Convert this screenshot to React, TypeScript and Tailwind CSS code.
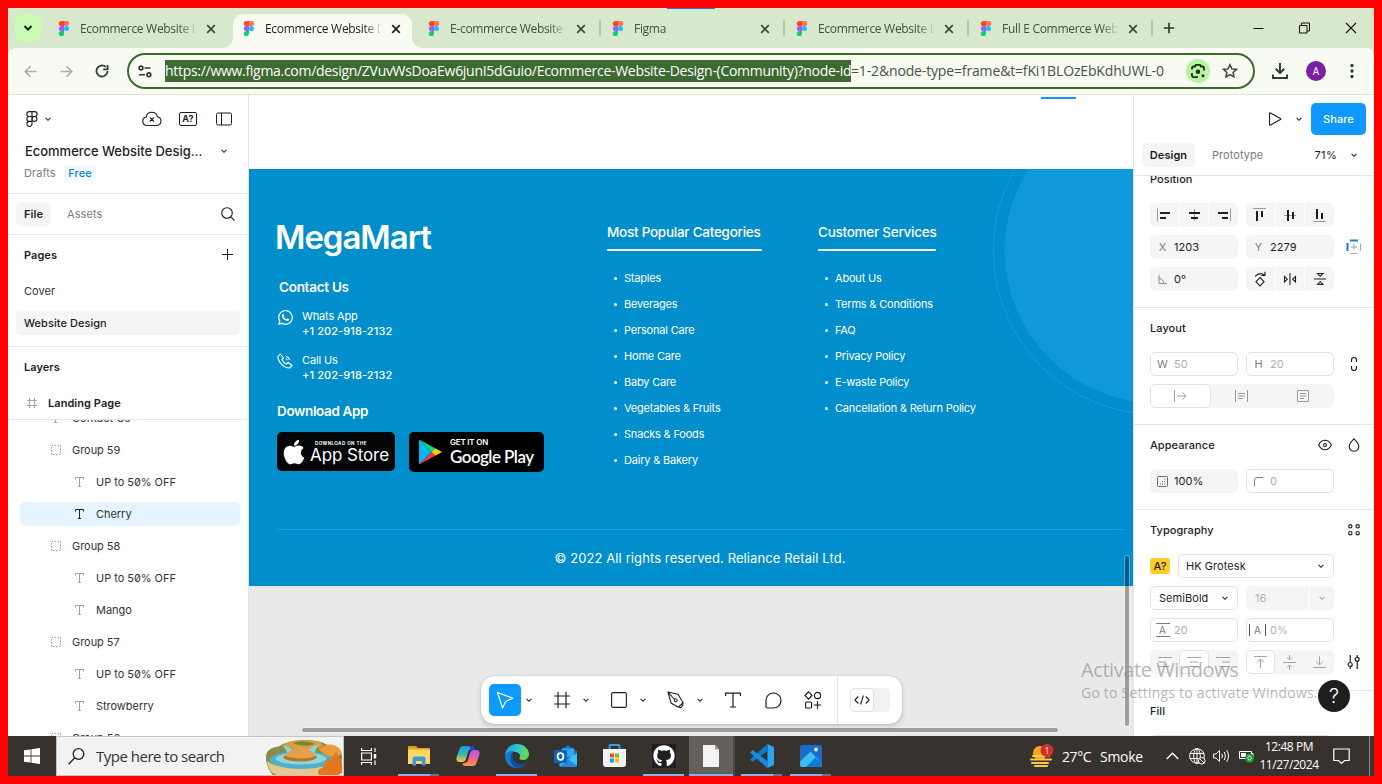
import React from "react";
import { FaApple, FaGithub, FaWhatsapp } from "react-icons/fa";

const SEGOE = "font-['Open_Sans','Noto_Sans',sans-serif]";

function FigmaFavicon() {
  return (
    <svg width="12" height="15" viewBox="0 0 12 15" className="shrink-0">
      <path d="M3.3 0H6v5H3.3a2.5 2.5 0 0 1 0-5Z" fill="#f24e1e" />
      <path d="M6 0h2.7a2.5 2.5 0 0 1 0 5H6Z" fill="#ff7262" />
      <path d="M3.3 5H6v5H3.3a2.5 2.5 0 0 1 0-5Z" fill="#a259ff" />
      <circle cx="8.5" cy="7.5" r="2.5" fill="#1abcfe" />
      <path d="M3.3 10H6v2.4A2.6 2.6 0 1 1 3.3 10Z" fill="#0acf83" />
    </svg>
  );
}

function Chevron({ color = "#1e1e1e", size = 8 }: { color?: string; size?: number }) {
  return (
    <svg width={size} height={size} viewBox="0 0 8 8" fill="none" className="shrink-0">
      <path d="M1.6 2.9 4 5.3l2.4-2.4" stroke={color} strokeWidth="1.1" />
    </svg>
  );
}

function BrowserTab({ title, active, divider }: { title: string; active?: boolean; divider?: boolean }) {
  return (
    <div className={`relative flex h-[34px] items-start ${active ? "rounded-t-[10px] bg-[#f8fbf2]" : ""}`}>
      {active && (
        <>
          <svg className="absolute -left-[10px] bottom-0" width="10" height="10">
            <path d="M10 0v10H0A10 10 0 0 0 10 0Z" fill="#f8fbf2" />
          </svg>
          <svg className="absolute -right-[10px] bottom-0" width="10" height="10">
            <path d="M0 0v10h10A10 10 0 0 1 0 0Z" fill="#f8fbf2" />
          </svg>
        </>
      )}
      <div className="flex h-[29px] w-full items-center">
        <div className="ml-[10px] flex">
          <FigmaFavicon />
        </div>
        <div
          className={`ml-[10px] w-[115px] overflow-hidden whitespace-nowrap text-[12px] tracking-[-0.3px] [mask-image:linear-gradient(to_right,black_86%,transparent_102%)] ${active ? "text-[#1b1f18]" : "text-[#43503c]"}`}
        >
          {title}
        </div>
        <svg width="10" height="10" viewBox="0 0 10 10" className="ml-[11px] shrink-0">
          <path d="m1.2 1.2 7.6 7.6m0-7.6L1.2 8.8" stroke={active ? "#1b1f18" : "#3e4a38"} strokeWidth="1.7" />
        </svg>
      </div>
      {divider && <div className="absolute right-px top-[6px] h-4 w-[2px] bg-[#a3d894]" />}
    </div>
  );
}

function Browser() {
  return (
    <header className={`${SEGOE} shrink-0`}>
      <div className="relative flex h-10 items-start bg-[#d8e8cd] pl-[6px] pt-[6px]">
        <div className="absolute left-[659px] top-0 h-px w-12 bg-[#1a7fd4]" />
        <div className="flex size-7 items-center justify-center rounded-[9px] bg-[#c9fbb5]">
          <svg width="10" height="10" viewBox="0 0 10 10" fill="none">
            <path d="m1.5 3 3.5 3.6L8.500 3" stroke="#0c2007" strokeWidth="2" />
          </svg>
        </div>
        <div className="ml-[6px] grid grid-cols-[185px_179px_190px_184px_184px_184px]">
          <BrowserTab title="Ecommerce Website Design" />
          <BrowserTab title="Ecommerce Website Design" active />
          <div className="flex pl-[6px]">
            <BrowserTab title="E-commerce Website" />
            <div className="ml-[13px] mt-[6px] h-4 w-[2px] bg-[#a3d894]" />
          </div>
          <BrowserTab title="Figma" divider />
          <BrowserTab title="Ecommerce Website Design" divider />
          <BrowserTab title="Full E Commerce Website" divider />
        </div>
        <svg width="12" height="12" viewBox="0 0 12 12" className="ml-[9px] mt-2">
          <path d="M6 .8v10.400M.8 6h10.400" stroke="#2f3b2a" strokeWidth="1.700" />
        </svg>
        <div className="ml-auto mr-[17px] mt-[8px] flex items-center gap-[35px]">
          <svg width="11" height="12" viewBox="0 0 11 12">
            <path d="M.5 6.500h10" stroke="#111" />
          </svg>
          <svg width="11" height="12" viewBox="0 0 11 12" fill="none" stroke="#111">
            <path d="M.5 3.500h7.500v7.500H.5ZM2.500 3.500V1h8v8H8" />
          </svg>
          <svg width="12" height="12" viewBox="0 0 12 12">
            <path d="m1 1 10 10M11 1 1 11" stroke="#111" strokeWidth="1.100" />
          </svg>
        </div>
      </div>
      <div className="bg-[#d8e8cd]">
        <div className="flex h-[46px] items-center rounded-t-[8px] bg-[#f8fbf2] pl-4">
          <svg width="13" height="13" viewBox="0 0 13 13" fill="none" stroke="#a9b0a3" strokeWidth="1.600">
            <path d="M12.500 6.500h-11M6.500 1.200 1.200 6.500l5.300 5.300" />
          </svg>
          <svg width="13" height="13" viewBox="0 0 13 13" fill="none" stroke="#a9b0a3" strokeWidth="1.600" className="ml-[23px]">
            <path d="M.5 6.500h11M6.500 1.200l5.300 5.300-5.300 5.300" />
          </svg>
          <svg width="14" height="14" viewBox="0 0 14 14" fill="none" stroke="#34412e" strokeWidth="1.800" className="ml-[22px]">
            <path d="M12.500 7A5.500 5.500 0 1 1 10.800 3M12.600 1v4.400H8.200" />
          </svg>
          <div className="ml-[18px] flex h-[36px] w-[1128px] items-center rounded-full border-2 border-[#3c6a31] pl-[9px]">
            <svg width="14" height="13" viewBox="0 0 14 13" fill="none" stroke="#2d3828" strokeWidth="1.600">
              <circle cx="3" cy="3" r="1.900" />
              <path d="M6.500 3h6M1 9.800h6" />
              <circle cx="10.900" cy="9.800" r="1.900" />
            </svg>
            <div className="ml-[13px] flex h-[22px] w-[1006px] items-center whitespace-nowrap text-[14px] text-[#4a5145]">
              <span className="flex h-[22px] w-[686px] shrink-0 items-center bg-[#3c6a31] pb-px tracking-[-0.295px] text-white">
                https://www.figma.com/design/ZVuvWsDoaEw6junI5dGuio/Ecommerce-Website-Design-(Community)?node-id
              </span>
              <span className="pb-px tracking-[-0.15px]">=1-2&amp;node-type=frame&amp;t=fKi1BLOzEbKdhUWL-0</span>
            </div>
            <div className="ml-[15px] flex size-6 items-center justify-center rounded-full bg-[#b9f2a3]">
              <svg width="16" height="16" viewBox="0 0 16 16" fill="none" stroke="#17300f" strokeWidth="1.800">
                <path d="M2 6.500V5.200A1.700 1.700 0 0 1 3.700 3.500H5l1-1.700h4l1 1.700h1.300A1.700 1.700 0 0 1 14 5.200v2.300M2 10v2.500A1.700 1.700 0 0 0 3.700 14.200H8" />
                <circle cx="8" cy="8.700" r="2.200" fill="#17300f" stroke="none" />
                <circle cx="13" cy="12.800" r="1.500" fill="#17300f" stroke="none" />
              </svg>
            </div>
            <svg width="16" height="16" viewBox="0 0 16 16" fill="none" stroke="#3a4435" strokeWidth="1.500" className="ml-[12px]">
              <path d="m8 1.800 1.900 4.100 4.500.5-3.300 3 .9 4.500L8 11.600 4 13.900l.9-4.500-3.300-3 4.500-.5Z" />
            </svg>
          </div>
          <svg width="18" height="18" viewBox="0 0 18 18" fill="none" stroke="#34412e" strokeWidth="2" className="ml-[16px]">
            <path d="M9 1v9.500M4.800 6.800 9 11l4.200-4.200M2 12.500V16h14v-3.500" />
          </svg>
          <div className="ml-[17px] flex size-5 items-center justify-center rounded-full bg-[#7b1fa2] text-[10px] text-white">A</div>
          <svg width="4" height="16" viewBox="0 0 4 16" fill="#34412e" className="ml-[24px]">
            <circle cx="2" cy="2.500" r="1.700" />
            <circle cx="2" cy="8" r="1.700" />
            <circle cx="2" cy="13.500" r="1.700" />
          </svg>
        </div>
      </div>
      <div className="h-px bg-[#dfe4d5]" />
    </header>
  );
}

function GroupIcon() {
  return (
    <svg width="10" height="10" viewBox="0 0 10 10" className="shrink-0">
      <rect x=".5" y=".5" width="9" height="9" fill="none" stroke="#999" strokeDasharray="1.500 1.500" />
    </svg>
  );
}

function TextIcon({ color = "#a3a3a3" }: { color?: string }) {
  return (
    <svg width="9" height="10" viewBox="0 0 9 10" className="shrink-0" fill="none" stroke={color}>
      <path d="M.5 2.500V.5h8v2M4.500.5v9M3 9.500h3" />
    </svg>
  );
}

function FrameIcon({ size = 10, color = "#a3a3a3" }: { size?: number; color?: string }) {
  return (
    <svg width={size} height={size} viewBox="0 0 10 10" fill="none" stroke={color} strokeWidth={size > 12 ? 0.75 : 1}>
      <path d="M2.500 0v10M7.500 0v10M0 2.500h10M0 7.500h10" />
    </svg>
  );
}

const layers = [
  { name: "Group 59", group: true },
  { name: "UP to 50% OFF" },
  { name: "Cherry", selected: true },
  { name: "Group 58", group: true },
  { name: "UP to 50% OFF" },
  { name: "Mango" },
  { name: "Group 57", group: true },
  { name: "UP to 50% OFF" },
  { name: "Strowberry" },
  { name: "Group 56", group: true },
];

function LeftPanel() {
  return (
    <aside className="flex w-[241px] shrink-0 flex-col overflow-hidden border-r border-[#e2e2e2] bg-white">
      <div className="h-[98px] shrink-0 pt-4">
        <div className="flex h-4 items-center pl-[18px]">
          <svg width="12" height="16" viewBox="0 0 12 16" fill="none" stroke="#1e1e1e" strokeWidth="1.100">
            <path d="M3.300.6H6v4.900H3.300a2.450 2.450 0 0 1 0-4.900ZM6 .6h2.700a2.450 2.450 0 0 1 0 4.900H6ZM3.300 5.500H6v4.900H3.300a2.450 2.450 0 0 1 0-4.900ZM3.300 10.400H6v2.500a2.550 2.550 0 1 1-2.700-2.500Z" />
            <circle cx="8.500" cy="7.950" r="2.450" />
          </svg>
          <div className="ml-[6px] flex">
            <Chevron />
          </div>
          <svg width="20" height="16" viewBox="0 0 20 16" fill="none" stroke="#1e1e1e" strokeWidth="1.100" className="ml-[90px]">
            <path d="M5 14.500A4.300 4.300 0 0 1 4.200 6a5.700 5.700 0 0 1 11.200-.2A4.400 4.400 0 0 1 15 14.500ZM7.800 6.300l4.200 4.200m0-4.200-4.200 4.200" />
          </svg>
          <div className="ml-[17px] flex h-[14px] w-[18px] items-center justify-center rounded-[2px] border border-[#1e1e1e] text-[9px] font-bold">A?</div>
          <svg width="16" height="14" viewBox="0 0 16 14" fill="none" stroke="#1e1e1e" className="ml-[19px]">
            <rect x=".5" y="1" width="15" height="12" rx="1.500" />
            <path d="M5.500 1v12" />
          </svg>
        </div>
        <div className="mt-4 flex h-4 items-center pl-[17px] pr-5">
          <span className="whitespace-nowrap text-[13px] font-medium tracking-[-0.03px]">Ecommerce Website Desig...</span>
          <span className="ml-auto flex">
            <Chevron />
          </span>
        </div>
        <div className="mt-[6px] flex h-4 items-center pl-4">
          <span className="w-10 text-[#7d7d7d]">Drafts</span>
          <span className="flex h-4 w-8 items-center justify-center rounded-[3px] bg-[#f2f9ff] font-medium text-[#0d82e8]">Free</span>
        </div>
      </div>
      <div className="flex h-[41px] shrink-0 items-center border-t border-[#e6e6e6] pl-2 pr-[13px]">
        <span className="flex h-6 w-[35px] items-center justify-center rounded-[5px] bg-[#f5f5f5] font-semibold">File</span>
        <span className="ml-4 tracking-[0.1px] text-[#7d7d7d]">Assets</span>
        <svg width="14" height="14" viewBox="0 0 14 14" fill="none" stroke="#1e1e1e" strokeWidth="1.100" className="ml-auto">
          <circle cx="6" cy="6" r="5.300" />
          <path d="m9.800 9.800 3.700 3.700" />
        </svg>
      </div>
      <div className="h-[112px] shrink-0 border-t border-[#e6e6e6] pt-2">
        <div className="flex h-6 items-center justify-between pl-4 pr-[15px]">
          <span className="font-semibold">Pages</span>
          <svg width="11" height="11" viewBox="0 0 11 11" stroke="#1e1e1e" className="-mt-px">
            <path d="M5.500 0v11M0 5.500h11" />
          </svg>
        </div>
        <div className="mt-3 flex h-6 items-center pl-4 text-[#333]">Cover</div>
        <div className="ml-2 mt-2 flex h-6 w-[224px] items-center rounded-[5px] bg-[#f5f5f5] pl-2 font-medium">Website Design</div>
      </div>
      <div className="h-[73px] shrink-0 border-t border-[#e6e6e6] pt-2">
        <div className="flex h-6 items-center pl-4 font-semibold">Layers</div>
        <div className="mt-3 flex h-6 items-center gap-[11px] pl-[19px] font-semibold">
          <FrameIcon />
          Landing Page
        </div>
      </div>
      <div className="min-h-0 flex-1 overflow-hidden border-t border-[#e6e6e6] text-[#333]">
        <div className="-mt-[18px] flex h-8 items-center gap-4 pl-[43px]">
          <TextIcon />
          <span className="-ml-[4px]">Contact Us</span>
        </div>
        {layers.map((l, i) => (
          <div key={i} className="flex h-8 items-center pl-3 pr-2">
            <div
              className={`flex h-6 w-full items-center rounded-[5px] ${l.selected ? "bg-[#e5f4ff]" : ""} ${l.group ? "gap-[11px] pl-[31px]" : "gap-3 pl-[55px]"}`}
            >
              {l.group ? <GroupIcon /> : <TextIcon color={l.selected ? "#1e1e1e" : "#a3a3a3"} />}
              <span className="slashed-zero tracking-[-0.04px]">{l.name}</span>
            </div>
          </div>
        ))}
      </div>
    </aside>
  );
}

const categories = ["Staples", "Beverages", "Personal Care", "Home Care", "Baby Care", "Vegetables & Fruits", "Snacks & Foods", "Dairy & Bakery"];
const services = ["About Us", "Terms & Conditions", "FAQ", "Privacy Policy", "E-waste Policy", "Cancellation & Return Policy"];

function LinkColumn({ title, items, wide }: { title: string; items: string[]; wide?: boolean }) {
  return (
    <div className={wide ? "w-[155px]" : "w-[118px]"}>
      <h3 className="flex h-[27px] items-start whitespace-nowrap text-[13.5px] font-medium leading-5 tracking-[-0.26px]">{title}</h3>
      <div className="h-[2px] rounded-full bg-white" />
      <ul className="mt-[14px]">
        {items.map((t) => (
          <li key={t} className="flex h-[26px] items-center whitespace-nowrap pl-[7px] text-[11px] tracking-[-0.19px]">
            <span className="mr-[7px] size-[3px] shrink-0 rounded-full bg-white" />
            {t}
          </li>
        ))}
      </ul>
    </div>
  );
}

function Contact({ icon, label }: { icon: React.ReactNode; label: string }) {
  return (
    <div className="flex text-[11px] leading-[15px]">
      <div className="w-[25px]">{icon}</div>
      <div>
        <div className="tracking-[-0.15px]">{label}</div>
        <div className="font-medium tracking-[0.1px]">+1 202-918-2132</div>
      </div>
    </div>
  );
}

function SiteFooter() {
  return (
    <div className="relative h-[417px] overflow-hidden bg-[#008ecc] text-white">
      <svg className="absolute right-0 top-0" width="150" height="250" viewBox="0 0 150 250">
        <circle cx="174.300" cy="81.500" r="152.600" fill="#0d99da" />
        <circle cx="174.300" cy="81.500" r="164" fill="none" stroke="#08a0e9" />
      </svg>
      <div className="relative flex h-[360px] pt-[48px]">
        <div className="w-[358px] pl-[26px]">
          <h2 className="text-[33px] font-semibold leading-10 tracking-[-1.05px]">MegaMart</h2>
          <h3 className="ml-1 mt-5 text-[13.5px] font-semibold leading-5 tracking-[-0.27px]">Contact Us</h3>
          <div className="ml-[2px] mt-[12px]">
            <Contact icon={<FaWhatsapp size={17} />} label="Whats App" />
          </div>
          <div className="ml-[2px] mt-[14px]">
            <Contact
              icon={
                <svg width="16" height="16" viewBox="0 0 16 16" fill="none" stroke="white" strokeWidth="1.100" strokeLinejoin="round">
                  <path d="M1 3.500 3.200 1 6.500 4.800 5 6.600c.8 1.800 2.400 3.500 4.300 4.400l1.900-1.500 3.800 3-2.300 2.400C7.500 15.500.5 8.500 1 3.500ZM9 3.500a4 4 0 0 1 3.500 3.500M8.800 5.800A2 2 0 0 1 10.200 7.200" />
                </svg>
              }
              label="Call Us"
            />
          </div>
          <h3 className="ml-[2px] mt-[18px] text-[13.5px] font-semibold leading-5 tracking-[-0.36px]">Download App</h3>
          <div className="ml-[2px] mt-[11px] flex gap-[14px]">
            <div className="flex h-[39px] w-[118px] items-center rounded-[5px] bg-[#020406] pl-[3px]">
              <FaApple size={28} className="shrink-0" />
              <div className="ml-[2px] mt-[1px]">
                <div className="ml-[5px] whitespace-nowrap text-[4.500px] font-bold leading-[5px] tracking-[0.45px]">DOWNLOAD ON THE</div>
                <div className="whitespace-nowrap text-[17px] leading-[18px] tracking-[-0.1px]">App Store</div>
              </div>
            </div>
            <div className="flex h-10 w-[135px] items-center rounded-[5px] bg-black pl-[10px]">
              <svg width="23" height="26" viewBox="0 0 23 26">
                <path d="M0 .6v24.800L12.500 13Z" fill="#00b8f5" />
                <path d="M0 .6 17 9.800 12.800 13.200Z" fill="#00e07a" />
                <path d="M0 25.400 17 16.200 12.800 12.800Z" fill="#f5364c" />
                <path d="m16.700 9.600 6.300 3.400-6.300 3.400L12.500 13Z" fill="#ffc900" />
              </svg>
              <div className="ml-2">
                <div className="text-[8px] font-semibold leading-[9px] tracking-[-0.2px]">GET IT ON</div>
                <div className="font-['Lato',sans-serif] text-[17px] font-semibold leading-[19px] tracking-[-0.550px]">Google Play</div>
              </div>
            </div>
          </div>
        </div>
        <div className="flex gap-14 pt-[5px]">
          <LinkColumn title="Most Popular Categories" items={categories} wide />
          <LinkColumn title="Customer Services" items={services} />
        </div>
      </div>
      <div className="relative ml-7 mr-[9px] h-px bg-[#14a0e4]" />
      <div className="relative mt-[18px] pl-[18px] text-center text-[13px] leading-5 tracking-[0.1px]">© 2022 All rights reserved. Reliance Retail Ltd.</div>
    </div>
  );
}

function ToolGroup({ children, active }: { children: React.ReactNode; active?: boolean }) {
  return (
    <div className="flex items-center">
      <div className={`flex size-8 items-center justify-center rounded-[5px] ${active ? "bg-[#0d99ff]" : ""}`}>{children}</div>
      <div className="flex w-4 justify-center">
        <Chevron />
      </div>
    </div>
  );
}

function Toolbar() {
  return (
    <div className="absolute left-[232px] top-[581px] flex h-12 w-[421px] items-center rounded-[13px] bg-white pl-2 shadow-[0_0_1px_rgba(0,0,0,0.35),0_2px_5px_rgba(0,0,0,0.16)]">
      <div className="flex gap-[9px]">
        <ToolGroup active>
          <svg width="18" height="18" viewBox="0 0 18 18" fill="none" stroke="white" strokeWidth="1.200" strokeLinejoin="round">
            <path d="M1.500 1.500 17 7.300 9.800 10.200 6.500 17Z" />
          </svg>
        </ToolGroup>
        <ToolGroup>
          <FrameIcon size={16} color="#1e1e1e" />
        </ToolGroup>
        <ToolGroup>
          <svg width="16" height="16" viewBox="0 0 16 16" fill="none" stroke="#1e1e1e" strokeWidth="1.100">
            <rect x=".6" y=".6" width="14.800" height="14.800" rx="1.500" />
          </svg>
        </ToolGroup>
        <ToolGroup>
          <svg width="18" height="18" viewBox="0 0 18 18" fill="none" stroke="#1e1e1e" strokeWidth="1.100" strokeLinejoin="round">
            <path d="M1 1 11 3.300l4.300 7.200.7 3.500-2 2.500-3.200-.500L4 12ZM1 1l6.500 7.500" />
            <circle cx="8.700" cy="9.300" r="1.500" />
            <path d="M16.500 11.500 11.500 16" />
          </svg>
        </ToolGroup>
      </div>
      <div className="ml-[9px] flex gap-2">
        <div className="flex size-8 items-center justify-center">
          <svg width="16" height="16" viewBox="0 0 16 16" fill="none" stroke="#1e1e1e" strokeWidth="1.200">
            <path d="M.6 4V1.100h14.800V4M8 1v14M5 15h6" />
          </svg>
        </div>
        <div className="flex size-8 items-center justify-center">
          <svg width="17" height="17" viewBox="0 0 17 17" fill="none" stroke="#1e1e1e" strokeWidth="1.200" strokeLinejoin="round">
            <path d="M8.500 1A7.500 7.500 0 1 1 8.500 16H2.200A1.200 1.200 0 0 1 1 14.800V8.500A7.500 7.500 0 0 1 8.500 1Z" />
          </svg>
        </div>
        <div className="flex size-8 items-center justify-center">
          <svg width="18" height="18" viewBox="0 0 18 18" fill="none" stroke="#1e1e1e" strokeWidth="1.200">
            <path d="M4.500.8 8 4.500 4.500 8.200 1 4.500ZM13.500 10.200v7.600M9.800 14h7.400" />
            <circle cx="13.500" cy="4.500" r="3.100" />
            <rect x="1.600" y="11" width="6" height="6" rx="1" />
          </svg>
        </div>
      </div>
      <div className="ml-2 flex h-full items-center border-l border-[#e6e6e6] pl-3">
        <div className="h-6 w-10 rounded-[5px] bg-[#f2f2f2]">
          <div className="flex size-6 items-center justify-center rounded-[5px] border border-[#e0e0e0] bg-white">
            <svg width="16" height="12" viewBox="0 0 16 12" fill="none" stroke="#1e1e1e" strokeWidth="1.100">
              <path d="M4.200 2.500.9 6l3.300 3.500M11.800 2.500 15.100 6l-3.300 3.500M9.400 1.500l-2.800 9" />
            </svg>
          </div>
        </div>
      </div>
    </div>
  );
}

function Canvas() {
  return (
    <main className="relative w-[884px] shrink-0 overflow-hidden bg-[#e9e9e9]">
      <div className="flex h-[74px] bg-white pl-[792px] pt-[2px]">
        <div className="h-[2px] w-[35px] bg-[#0d99ff]" />
      </div>
      <SiteFooter />
      <div className="absolute left-[875px] top-[460px] h-[172px] w-[6px] rounded-full border border-white/30 bg-black/32 bg-clip-padding" />
      <div className="absolute left-[52px] top-[632px] h-[6px] w-[758px] rounded-full border border-white/30 bg-black/32 bg-clip-padding" />
      <Toolbar />
    </main>
  );
}

function Segments({ children }: { children: React.ReactNode }) {
  return <div className="grid h-6 w-[88px] grid-cols-3 gap-px overflow-hidden rounded-[5px] *:flex *:items-center *:justify-center *:bg-[#f5f5f5]">{children}</div>;
}

function Field({ icon, value, outlined }: { icon: React.ReactNode; value: string; outlined?: boolean }) {
  return (
    <div
      className={`flex h-6 w-[88px] items-center rounded-[5px] ${outlined ? "border border-[#e2e2e2] text-[#b0b0b0]" : "bg-[#f5f5f5] pl-px"}`}
    >
      <span className="flex w-[23px] shrink-0 justify-center text-[#7d7d7d]">{icon}</span>
      <span>{value}</span>
    </div>
  );
}

function Lines({ d, w = 14, h = 14, color = "#1e1e1e", sw = 1 }: { d: string; w?: number; h?: number; color?: string; sw?: number }) {
  return (
    <svg width={w} height={h} viewBox={`0 0 ${w} ${h}`} fill="none" stroke={color} strokeWidth={sw} className="shrink-0">
      <path d={d} />
    </svg>
  );
}

function AlignIcon({ rule, bars }: { rule: string; bars: string }) {
  return (
    <svg width="14" height="14" viewBox="0 0 14 14" fill="none" className="shrink-0">
      <path d={rule} stroke="#9a9a9a" />
      <path d={bars} stroke="#1e1e1e" strokeWidth="2" />
    </svg>
  );
}

function RightPanel() {
  return (
    <aside className="relative flex w-[241px] shrink-0 flex-col overflow-hidden border-l border-[#e2e2e2] bg-white">
      <div className="h-[80px] shrink-0 pt-2">
        <div className="flex h-8 items-center justify-end pr-2">
          <Lines w={14} h={14} sw={1.1} d="M1.500 1.500v11q0 1.200 1 .6L12.400 7.600q.9-.6 0-1.200L2.500.9q-1-.6-1 .6Z" />
          <span className="ml-[13px] mr-2 flex">
            <Chevron />
          </span>
          <span className="flex h-8 w-[55px] items-center justify-center rounded-[5px] bg-[#0d99ff] font-medium text-white">Share</span>
        </div>
        <div className="mt-2 flex h-6 items-center pl-2 pr-4">
          <span className="flex h-6 w-[53px] items-center justify-center rounded-[5px] bg-[#f5f5f5] font-semibold">Design</span>
          <span className="ml-[17px] text-[#7d7d7d]">Prototype</span>
          <span className="ml-auto mr-[13px] tracking-[0.3px]">71%</span>
          <Chevron />
        </div>
      </div>
      <div className="h-[132px] shrink-0 overflow-hidden border-t border-[#e6e6e6] pl-4">
        <div className="-mt-[8px] h-[35px] font-medium leading-6">
          <span className="block -translate-y-px">Position</span>
        </div>
        <div className="flex gap-2">
          <Segments>
            <div><AlignIcon rule="M.5 .5v13" bars="M3 5h10M3 10h6" /></div>
            <div><AlignIcon rule="M7.500 1v12" bars="M2 5h11M4 10h7" /></div>
            <div><AlignIcon rule="M13.500 .5v13" bars="M1 5h10M5 10h6" /></div>
          </Segments>
          <Segments>
            <div><AlignIcon rule="M0 .5h13" bars="M4 3v10M9 3v6" /></div>
            <div><AlignIcon rule="M1 7.500h12" bars="M5 2v11M10 4v7" /></div>
            <div><AlignIcon rule="M0 13.500h13" bars="M4 1v10M9 5v6" /></div>
          </Segments>
        </div>
        <div className="mt-2 flex items-center gap-2">
          <Field icon="X" value="1203" />
          <Field icon="Y" value="2279" />
          <svg width="16" height="16" viewBox="0 0 16 16" fill="none" stroke="#a3a3a3" className="ml-1">
            <path d="M4 1.500h8M1.500 4v8" stroke="#0d82e8" strokeWidth="2" />
            <path d="M5 8h6M8 5v6M14.500 4.500v7M4.500 14.500h7" />
          </svg>
        </div>
        <div className="mt-2 flex gap-2">
          <Field icon={<Lines w={9} h={9} color="#8a8a8a" d="M1 0v8.500h8M1 3.500a5 5 0 0 1 4.500 5" />} value="0°" />
          <Segments>
            <div><Lines w={14} h={16} sw={1.1} d="M7 6.500 11 10.700 7 15 3 10.700ZM2 5.500Q6 .5 11.500 4M12 .8v3.700H8.300" /></div>
            <div><Lines w={14} h={12} sw={1.1} d="M7 0v12M1.500 3.500v5.500L4.300 6.200ZM12.500 3.500v5.500L9.700 6.200Z" /></div>
            <div><Lines w={12} h={14} sw={1.1} d="M0 7h12M3.500 1.500h5.500L6.200 4.300ZM3.500 12.500h5.500L6.200 9.700Z" /></div>
          </Segments>
        </div>
      </div>
      <div className="h-[117px] shrink-0 border-t border-[#e6e6e6] pl-4 pt-2">
        <div className="h-6 font-medium leading-6">Layout</div>
        <div className="mt-3 flex items-center gap-2">
          <Field icon="W" value="50" outlined />
          <Field icon="H" value="20" outlined />
          <span className="ml-2 flex">
            <Lines w={8} h={16} sw={1.2} d="M1.500 6V4a2.500 2.500 0 0 1 5 0v2M1.500 10v2a2.500 2.500 0 0 0 5 0v-2" />
          </span>
        </div>
        <div className="mt-2 grid h-6 w-[184px] grid-cols-3 rounded-[5px] bg-[#f5f5f5] *:flex *:items-center *:justify-center">
          <div className="rounded-[5px] border border-[#e2e2e2] bg-white">
            <Lines w={13} h={12} color="#9a9a9a" d="M.5 .5v11M3 6h9M8.500 2.500 12 6 8.500 9.500" />
          </div>
          <div>
            <Lines w={13} h={12} color="#9a9a9a" d="M.5 0v12M12.500 0v12M3 3.500h7M3 6h7M3 8.500h5" />
          </div>
          <div>
            <Lines w={12} h={12} color="#9a9a9a" d="M.5 .5h11v11H.5ZM3 3.500h6M3 6h6M3 8.500h4" />
          </div>
        </div>
      </div>
      <div className="h-[85px] shrink-0 border-t border-[#e6e6e6] pl-4 pt-2">
        <div className="flex h-6 items-center pr-[14px] font-medium leading-6">
          <span>Appearance</span>
          <svg width="14" height="12" viewBox="0 0 14 12" fill="none" stroke="#1e1e1e" strokeWidth="1.100" className="ml-auto">
            <path d="M.6 6Q3 1.200 7 1.200T13.400 6Q11 10.800 7 10.800T.6 6Z" />
            <circle cx="7" cy="6" r="1.500" />
          </svg>
          <svg width="12" height="14" viewBox="0 0 12 14" fill="none" stroke="#1e1e1e" strokeWidth="1.100" className="ml-[16px]">
            <path d="M6 .8Q10.800 5.300 10.800 8.500a4.800 4.800 0 0 1-9.600 0Q1.200 5.300 6 .8Z" />
          </svg>
        </div>
        <div className="mt-3 flex gap-2">
          <Field
            icon={
              <svg width="11" height="11" viewBox="0 0 11 11" fill="none" stroke="#6b6b6b">
                <rect x=".5" y=".5" width="10" height="10" rx="1" />
                <path d="M7.500 3h1.500M5 5.500h4M3 8h6" strokeDasharray="1 1" />
              </svg>
            }
            value="100%"
          />
          <Field icon={<Lines w={9} h={9} color="#7d7d7d" d="M.5 9V3A2.500 2.500 0 0 1 3 .5h6" />} value="0" outlined />
        </div>
      </div>
      <div className="h-[181px] shrink-0 border-t border-[#e6e6e6] pl-4 pt-2">
        <div className="flex h-6 items-center justify-between pr-[14px] font-medium">
          Typography
          <svg width="12" height="12" viewBox="0 0 12 12" fill="none" stroke="#1e1e1e" strokeWidth="1.100">
            <circle cx="2.300" cy="2.300" r="1.700" />
            <circle cx="9.700" cy="2.300" r="1.700" />
            <circle cx="2.300" cy="9.200" r="1.700" />
            <circle cx="9.700" cy="9.200" r="1.700" />
          </svg>
        </div>
        <div className="mt-3 flex items-center gap-2">
          <span className="flex h-4 w-5 items-center justify-center rounded-[3px] bg-[#ffcd29] font-medium">A?</span>
          <div className="flex h-6 w-[156px] items-center justify-between rounded-[5px] border border-[#e2e2e2] pl-[7px] pr-2">
            HK Grotesk
            <Chevron />
          </div>
        </div>
        <div className="mt-2 flex gap-2">
          <div className="flex h-6 w-[88px] items-center justify-between rounded-[5px] border border-[#e2e2e2] pl-2 pr-2">
            SemiBold
            <Chevron />
          </div>
          <div className="grid h-6 w-[88px] grid-cols-[63px_24px] gap-px overflow-hidden rounded-[5px] text-[#b0b0b0]">
            <span className="flex items-center bg-[#f5f5f5] pl-[9px]">16</span>
            <span className="flex items-center justify-center bg-[#f5f5f5]">
              <Chevron color="#a3a3a3" />
            </span>
          </div>
        </div>
        <div className="mt-2 flex gap-2">
          <Field icon={<span className="flex h-[14px] w-[14px] items-center justify-center border-y border-[#7d7d7d] text-[10px]">A</span>} value="20" outlined />
          <Field icon={<span className="-ml-[2px] flex h-[12px] w-[17px] items-center justify-center border-x border-[#555] text-[10px]">A</span>} value="0%" outlined />
        </div>
        <div className="mt-2 flex items-center gap-2">
          <div className="grid h-6 w-[88px] grid-cols-3 rounded-[5px] bg-[#f5f5f5] *:flex *:items-center *:justify-center">
            <div><Lines w={14} h={10} color="#a3a3a3" d="M0 .5h14M0 5h8M0 9.500h11" /></div>
            <div className="rounded-[5px] border border-[#e2e2e2] bg-white"><Lines w={14} h={10} color="#a3a3a3" d="M0 .5h14M3 5h8M1.500 9.500h11" /></div>
            <div><Lines w={14} h={10} color="#a3a3a3" d="M0 .5h14M6 5h8M3 9.500h11" /></div>
          </div>
          <div className="grid h-6 w-[88px] grid-cols-3 rounded-[5px] bg-[#f5f5f5] *:flex *:items-center *:justify-center">
            <div className="rounded-[5px] border border-[#e2e2e2] bg-white"><Lines w={13} h={12} color="#a3a3a3" d="M0 .5h13M6.500 12V3.500M3 6.500l3.500-3.500L10 6.500" /></div>
            <div><Lines w={13} h={15} color="#a3a3a3" d="M0 7.500h13M6.500 0v4.500M4 2.500l2.500 2.500L9 2.500M6.500 15v-4.500M4 12.500 6.500 10 9 12.500" /></div>
            <div><Lines w={13} h={12} color="#a3a3a3" d="M0 11.500h13M6.500 0v8.500M3 5.500 6.500 9 10 5.500" /></div>
          </div>
          <svg width="14" height="14" viewBox="0 0 14 14" fill="none" stroke="#1e1e1e" strokeWidth="1.200" className="ml-[5px]">
            <path d="M3.200 0v7.500M3.200 11.500V14M10.200 6.500V14M10.200 0v2" />
            <circle cx="3.200" cy="9.500" r="2" />
            <circle cx="10.200" cy="4.300" r="2" />
          </svg>
        </div>
      </div>
      <div className="h-[46px] shrink-0 border-t border-[#e6e6e6] pl-4 pt-2">
        <div className="h-6 font-medium leading-6">Fill</div>
        <div className="mt-3 h-6 w-[182px] rounded-[5px] border border-[#e2e2e2]" />
      </div>
    </aside>
  );
}

function TaskItem({ children, underline, extra, active }: { children?: React.ReactNode; underline?: boolean; extra?: boolean; active?: boolean }) {
  return (
    <div
      className={`relative flex h-10 shrink-0 items-center justify-center ${active ? "ml-px mr-[2px] w-[46px] border-r-2 border-[#4c4945] bg-[#64615d] bg-clip-padding" : "w-[49px]"}`}
    >
      {children}
      {underline && (
        <div className={`absolute bottom-0 flex h-[2px] ${active ? "inset-x-0" : "inset-x-[4px]"}`}>
          <div className="flex-1 bg-[#76b9ed]" />
          {extra && <div className="w-[9px] bg-[#557d9c]" />}
        </div>
      )}
    </div>
  );
}

function Taskbar() {
  return (
    <footer className={`${SEGOE} flex h-10 shrink-0 items-center bg-[#37322e] text-white`}>
      <div className="flex h-10 w-12 items-center justify-center">
        <svg width="16" height="16" viewBox="0 0 16 16" fill="white">
          <path d="M0 2.300 6.600 1.400v6.200H0ZM7.400 1.300 16 0v7.600H7.400ZM0 8.400h6.600v6.200L0 13.700ZM7.400 8.400H16V16l-8.600-1.200Z" />
        </svg>
      </div>
      <div className="flex h-10 w-[288px] items-center overflow-hidden border border-[#c4c4c4] bg-[#f2f2f2] pl-[11px] text-[#333]">
        <svg width="17" height="17" viewBox="0 0 17 17" fill="none" stroke="#222" strokeWidth="1.300">
          <circle cx="10.500" cy="6" r="5.300" />
          <path d="m6.700 9.800-6 6.500" />
        </svg>
        <span className="ml-[11px] w-[150px] whitespace-nowrap text-[15px] tracking-[-0.5px]">Type here to search</span>
        <svg width="78" height="38" viewBox="0 0 80 38" className="ml-[19px] shrink-0" preserveAspectRatio="none">
          <path d="M1 20Q1 11 14 9.500 24 3 40 3q16 0 24 5 14 1 15 11 1 9-5 19H8Q1 30 1 20Z" fill="#7d9240" />
          <path d="M4 15q6-6 14-5l-6 12-10 4Q0 19 4 15Z" fill="#8f8a52" />
          <path d="M17 9Q28 2 40 3q14 0 20 5-9 6-24 4-9-1-19-3Z" fill="#e49b3d" />
          <path d="M28 6q12-4 24 1-12 4-24-1Z" fill="#6b8c35" />
          <path d="M2 24q2 12 10 14h60q7-6 7-16-12 9-40 9T2 24Z" fill="#e6c78e" />
          <ellipse cx="37" cy="23" rx="32" ry="9" fill="#4fb1cb" />
          <ellipse cx="37" cy="21.500" rx="26" ry="6" fill="#8fd6da" />
          <path d="m18 8 17 6-9 6ZM55 7 40 14l9 5Z" fill="#7fd8e0" />
          <ellipse cx="36" cy="20" rx="17" ry="4.500" fill="#b8722a" />
          <path d="M20 19q16-18 33 0-16 5-33 0Z" fill="#e7a04a" />
          <path d="M55 12q12-9 22 0 4 7-6 8-10-1-16-8Z" fill="#ef9a38" />
          <path d="M63 24q3-7 5 1 5-18 8-2 4-3 3 13l-6 3H56q-4-7 3-8Z" fill="#e6761d" />
        </svg>
      </div>
      <TaskItem>
        <svg width="16" height="17" viewBox="0 0 16 17" fill="none" stroke="white" strokeWidth="1.200">
          <path d="M.6 0v2.500h9.800V0M.6 17v-2.500h9.800V17M.6 5h9.800v7H.6ZM14 0v4M14 12.500V17" />
          <path d="M14 6v4.500" strokeWidth="2.500" />
        </svg>
      </TaskItem>
      <span className="w-px" />
      <TaskItem underline extra>
        <svg width="22" height="20" viewBox="0 0 22 20">
          <path d="M0 2V1q0-1 1-1h7l2 2h11q1 0 1 1v15H0Z" fill="#e5a113" />
          <path d="M0 3.500h22V18H0Z" fill="#ffd765" />
          <path d="M4.500 19.500v-7q0-2 2-2h9q2 0 2 2v7h-3.500V15h-6v4.500Z" fill="#3f98dc" />
        </svg>
      </TaskItem>
      <TaskItem>
        <svg width="24" height="22" viewBox="0 0 24 22">
          <defs>
            <linearGradient id="cpa" x1="0" y1="0" x2="0" y2="1"><stop stopColor="#1597f0" /><stop offset=".5" stopColor="#37b9a7" /><stop offset="1" stopColor="#f5cb37" /></linearGradient>
            <linearGradient id="cpb" x1="0" y1="0" x2="0" y2="1"><stop stopColor="#a35cf0" /><stop offset=".5" stopColor="#f05f9d" /><stop offset="1" stopColor="#fb9448" /></linearGradient>
          </defs>
          <path d="M7 1h8q2 0 2.700 2L16 4q-3 0-4 3l-2 7q-1 3-4 3H3q-4-1-2-6L3.500 4Q4.500 1 7 1Z" fill="url(#cpa)" />
          <path d="M13 1h3q2 0 3 4h-4Z" fill="#174ccf" />
          <path d="M17 21H9q-2 0-2.700-2L8 18q3 0 4-3l2-7q1-3 4-3h3q4 1 2 6l-2.500 7q-1 3-3.500 3Z" fill="url(#cpb)" />
        </svg>
      </TaskItem>
      <TaskItem underline>
        <svg width="24" height="24" viewBox="0 0 24 24">
          <defs>
            <linearGradient id="ed" x1="0" y1="0" x2="1" y2=".3"><stop stopColor="#1b8fe0" /><stop offset=".5" stopColor="#30c2d8" /><stop offset="1" stopColor="#62dc57" /></linearGradient>
          </defs>
          <path d="M0 12C0 5 5 0 12 0s12 5 12 10c0 4-3 6-6 6-4 0-4-1.500-3.200-2.500C16 11 14 8 10 8 5 8 1 10 0 12Z" fill="url(#ed)" />
          <path d="M0 12C1 7.500 6 6.200 10 7.200 6.500 8.500 5 12 6.500 16c1.500 4 5.500 6.500 10 5.500l4-2C19 22 16 24 12 24 5 24 0 19 0 12Z" fill="#1279cf" />
          <path d="M9.500 9C6.500 12 7.500 17 12 19.500c4 2 8 .5 10-1.500 1 1-4 6-10 6-7-2-9-11-2.500-15Z" fill="#0d4f9e" />
        </svg>
      </TaskItem>
      <TaskItem>
        <svg width="24" height="24" viewBox="0 0 24 24">
          <path d="M5 7 14 1l9 6v14q0 1-1 1H6q-1 0-1-1Z" fill="#1372cf" />
          <path d="M8 4.500h12V13H8Z" fill="#35a8e8" />
          <path d="m5 21 18-12v12q0 1.500-1.500 1.500h-15Z" fill="#36c3f2" />
          <path d="m14 15 9 6.500-1.500 1H6Z" fill="#1e8ee0" />
          <rect x="0" y="6" width="13" height="13" rx="1.200" fill="#0f63bd" />
          <ellipse cx="6.500" cy="12.500" rx="2.900" ry="3.300" fill="none" stroke="white" strokeWidth="1.800" />
        </svg>
      </TaskItem>
      <TaskItem>
        <svg width="23" height="24" viewBox="0 0 23 24">
          <path d="M6.500 5V1.800q0-.8.8-.8h8.400q.8 0 .8.800V5" fill="none" stroke="#2aa3ea" strokeWidth="1.800" />
          <path d="M0 5h23v15q0 3-3 3H3q-3 0-3-3Z" fill="#f3f3f3" />
          <path d="M7 9.500h4v4H7Z" fill="#f25022" />
          <path d="M12 9.500h4v4h-4Z" fill="#7fba00" />
          <path d="M7 14.500h4v4H7Z" fill="#00a4ef" />
          <path d="M12 14.500h4v4h-4Z" fill="#ffb900" />
        </svg>
      </TaskItem>
      <TaskItem underline>
        <div className="flex size-6 items-center justify-center bg-[#1f1f22]">
          <FaGithub size={22} />
        </div>
      </TaskItem>
      <TaskItem underline active>
        <svg width="16" height="22" viewBox="0 0 16 22">
          <path d="M0 0h12l4 4.500V22H0Z" fill="#f4f4f4" />
          <path d="M12 0v4.500h4Z" fill="#9e9e9e" />
        </svg>
      </TaskItem>
      <TaskItem underline extra>
        <svg width="24" height="24" viewBox="0 0 24 24">
          <path d="m17.500 0 6.500 3v18l-6.500 3Z" fill="#2aa6f2" />
          <path d="M17.500 0 0 15.500l2.500 2.500L18 6.500Z" fill="#0a7cc9" />
          <path d="M17.500 24 0 8.500 2.500 6 18 17.500Z" fill="#1490df" />
        </svg>
      </TaskItem>
      <TaskItem underline extra>
        <svg width="22" height="22" viewBox="0 0 22 22">
          <rect width="22" height="22" rx="2" fill="#1c6bc9" />
          <circle cx="16" cy="4.500" r="2" fill="#dff1ff" />
          <path d="M0 16.500 9.500 7.500q1-.8 2 0L22 18v2q0 2-2 2H2q-2 0-2-2Z" fill="#39bff0" />
          <path d="m11 17 4.500-4.500L22 18v2q0 2-2 2H6Z" fill="#1479d2" />
        </svg>
      </TaskItem>
      <div className="ml-auto flex h-10 items-center">
        <svg width="24" height="24" viewBox="0 0 24 24" className="shrink-0">
          <circle cx="10" cy="9" r="7" fill="#f6a821" />
          <path d="M3 12h16M1 15.500h20M2 19h16M5 22h12" stroke="#fbc64a" strokeWidth="2.200" strokeLinecap="round" />
          <circle cx="17" cy="6.500" r="6.500" fill="#d22f27" />
          <text x="17" y="10" textAnchor="middle" fontSize="9" fill="white">1</text>
        </svg>
        <span className="ml-[8px] w-[38px] whitespace-nowrap text-[14px] tracking-[-0.4px]">27°C</span>
        <span className="w-[66px] whitespace-nowrap text-[14px] tracking-[-0.3px]">Smoke</span>
        <svg width="13" height="8" viewBox="0 0 13 8" fill="none" stroke="white" strokeWidth="1.300">
          <path d="M.7 7 6.500 1.200 12.300 7" />
        </svg>
        <svg width="17" height="17" viewBox="0 0 17 17" fill="none" stroke="white" className="ml-[10px]">
          <circle cx="8" cy="8" r="7.300" />
          <ellipse cx="8" cy="8" rx="3.300" ry="7.300" />
          <path d="M.7 5.500h14.600M.7 10.500h9M8 .7v14.600" />
          <circle cx="12.800" cy="12.800" r="3.300" fill="#37322e" />
          <path d="m10.500 10.500 4.600 4.600" />
        </svg>
        <svg width="17" height="14" viewBox="0 0 17 14" fill="none" stroke="white" className="ml-[7px]">
          <path d="M.6 5v4H3l3.500 3.500v-11L3 5ZM8.800 4.800q1.200 2.200 0 4.400M11.300 3q2.300 4 0 8M13.700 1.200q3.600 5.800 0 11.600" />
        </svg>
        <svg width="17" height="14" viewBox="0 0 17 14" className="ml-[8px]">
          <path d="M1.500 2.500h12v7h-12ZM13.500 4.500h1.500v3h-1.500" fill="none" stroke="white" />
          <path d="M3 4h5v4H3Z" fill="white" />
          <circle cx="11.500" cy="9" r="4.500" fill="#1f9b3a" />
          <path d="M11.500 6.500 13.500 9l-2 2.500-2-2.500Z" fill="none" stroke="white" strokeWidth=".8" />
        </svg>
        <div className="ml-[2px] w-[64px] whitespace-nowrap text-center text-[12px] leading-[18px] tracking-[-0.45px]">
          <div>12:48 PM</div>
          <div>11/27/2024</div>
        </div>
        <svg width="17" height="17" viewBox="0 0 17 17" fill="none" stroke="white" strokeWidth="1.200" className="ml-[12px] mr-[19px]">
          <path d="M.8 1h15.400v11.500h-4.700L8.500 15.500l-3-3H.8Z" />
        </svg>
        <div className="mr-1 h-10 w-px bg-[#8a8683]" />
      </div>
    </footer>
  );
}

export default function App() {
  return (
    <div className="relative flex h-[784px] w-[1382px] flex-col overflow-hidden border-8 border-[#ff0000] bg-white">
      <Browser />
      <div className="flex min-h-0 flex-1 font-['Inter',sans-serif] text-[11px] leading-4 tracking-[0.055px] text-[#1e1e1e]">
        <LeftPanel />
        <Canvas />
        <RightPanel />
      </div>
      <div className={`${SEGOE} pointer-events-none absolute left-[1073px] top-[649px] whitespace-nowrap text-[#868686]/60`}>
        <div className="text-[20px] leading-[26px] tracking-[-0.42px]">Activate Windows</div>
        <div className="mt-px text-[14px] leading-[18px] tracking-[0.21px]">Go to Settings to activate Windows.</div>
      </div>
      <div className="absolute left-[1310px] top-[672px] flex size-8 items-center justify-center rounded-full bg-[#1e1e1e] font-['Inter',sans-serif] text-[20px] font-light text-white">?</div>
      <Taskbar />
    </div>
  );
}
